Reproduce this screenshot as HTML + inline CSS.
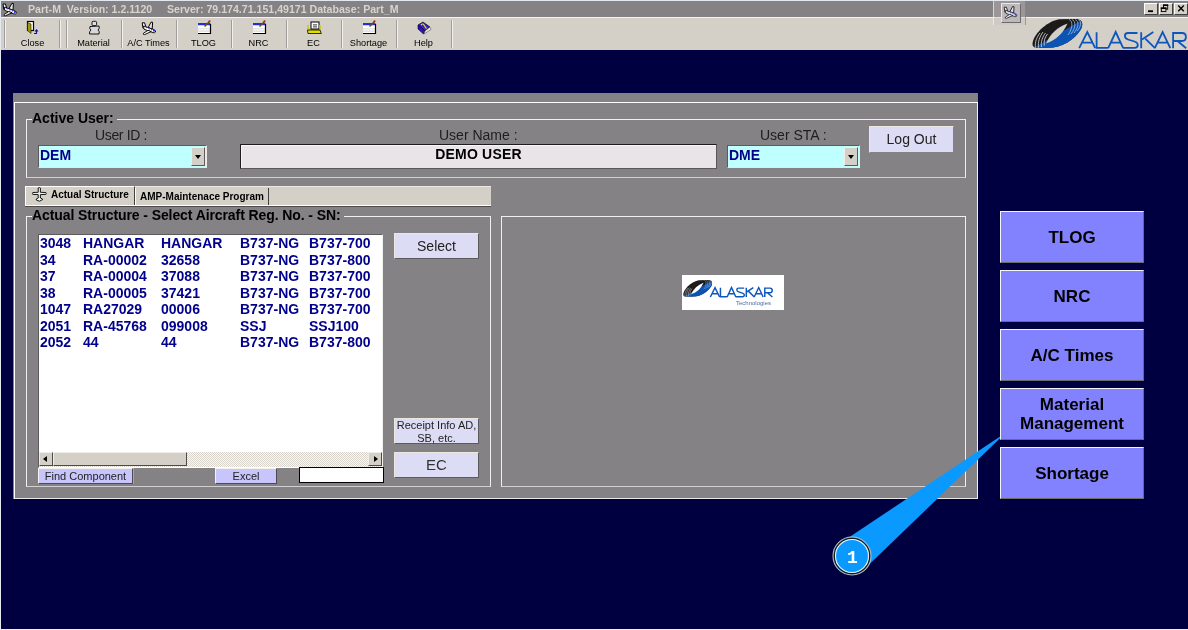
<!DOCTYPE html>
<html><head><meta charset="utf-8">
<style>
*{margin:0;padding:0;box-sizing:border-box}
html,body{width:1188px;height:630px;overflow:hidden;background:#000040;font-family:"Liberation Sans",sans-serif}
.a{position:absolute}
#wrap{position:absolute;left:0;top:0;width:1188px;height:630px;background:#000040;will-change:transform}
#title{left:1px;top:1px;width:1187px;height:16px;background:#848284}
.tt{color:#d8d4cc;font-weight:bold;font-size:10.6px;top:3px;white-space:nowrap}
#tool{left:1px;top:17px;width:1187px;height:33px;background:#d4d0c8;border-top:1px solid #f4f2ee}
.sep{top:20px;width:2px;height:28px;border-left:1px solid #a09e9c;border-right:1px solid #f2f0ec}
.tl{top:37.5px;font-size:9.2px;color:#000;white-space:nowrap;text-align:center;width:55px}
#panel{left:13px;top:93px;width:965px;height:406px;background:#848284}
.grp{border:1px solid #f0f0f0;border-bottom-color:#d0d0d0}
.lbl{font-size:14px;color:#1e1e1e;white-space:nowrap}
.btn{background:#dcdcf4;border:1px solid;border-color:#ece8e0 #5c5a5c #5c5a5c #ece8e0;text-align:center;color:#222;white-space:nowrap}
.rb{left:1000px;width:144px;height:52px;background:#8282ff;border:1px solid;border-color:#f4f4f4 #6c6c6c #6c6c6c #f4f4f4;font-weight:bold;font-size:17px;color:#000;text-align:center;display:flex;align-items:center;justify-content:center;line-height:19px}
.combo{background:#c0ffff;border:1px solid;border-color:#5c5a5c #ece8e4 #ece8e4 #5c5a5c}
.combo span{position:absolute;left:1px;top:-1px;font-weight:bold;font-size:14px;line-height:21px;color:#00008c}
.dd{position:absolute;top:1px;width:14px;height:19px;background:#d4d0c8;border:1px solid;border-color:#f0eee8 #5c5a5c #5c5a5c #f0eee8}
.dd:after{content:"";position:absolute;left:3px;top:7px;border-left:3.5px solid transparent;border-right:3.5px solid transparent;border-top:4px solid #000}
.tab{font-weight:bold;font-size:10px;color:#000;white-space:nowrap}
.sbb{width:14px;height:14px;background:#d4d0c8;border:1px solid;border-color:#f0eee8 #4c4a4c #4c4a4c #f0eee8}
.al{position:absolute;left:3px;top:3px;border-top:3.5px solid transparent;border-bottom:3.5px solid transparent;border-right:4px solid #000}
.ar{position:absolute;left:5px;top:3px;border-top:3.5px solid transparent;border-bottom:3.5px solid transparent;border-left:4px solid #000}
.row b{position:absolute;font-weight:bold}
.c1{left:0}.c2{left:43px}.c3{left:121px}.c4{left:200px}.c5{left:269px}
.wc{top:3px;width:14px;height:12px;background:#d4d0c8;border:1px solid;border-color:#fff #404040 #404040 #fff}
.row{position:relative;font-weight:bold;font-size:14px;color:#00008c;white-space:nowrap;height:16.5px;line-height:16.5px}
</style></head><body>
<div id="wrap">
<div class="a" style="left:0;top:0;width:1188px;height:1px;background:#e4e8f0"></div>
<div class="a" style="left:0;top:0;width:1px;height:630px;background:#e4e8f0"></div>
<div class="a" style="left:0;top:629px;width:1188px;height:1px;background:#f0f0f0"></div>
<!-- title bar -->
<div id="title" class="a"></div>
<div class="a tt" style="left:28px">Part-M&nbsp; Version: 1.2.1120</div>
<div class="a tt" style="left:167px">Server: 79.174.71.151,49171 Database: Part_M</div>

<!-- toolbar -->
<div id="tool" class="a"></div>
<div class="a sep" style="left:4px"></div>
<div class="a sep" style="left:59px"></div>
<div class="a sep" style="left:66px"></div>
<div class="a sep" style="left:121px"></div>
<div class="a sep" style="left:176px"></div>
<div class="a sep" style="left:231px"></div>
<div class="a sep" style="left:286px"></div>
<div class="a sep" style="left:341px"></div>
<div class="a sep" style="left:396px"></div>
<div class="a sep" style="left:451px"></div>
<div class="a tl" style="left:5px">Close</div>
<div class="a tl" style="left:66px">Material</div>
<div class="a tl" style="left:121px">A/C Times</div>
<div class="a tl" style="left:176px">TLOG</div>
<div class="a tl" style="left:231px">NRC</div>
<div class="a tl" style="left:286px">EC</div>
<div class="a tl" style="left:341px">Shortage</div>
<div class="a tl" style="left:396px">Help</div>

<!-- panel -->
<div id="panel" class="a"></div>
<div class="a" style="left:14px;top:102px;width:964px;height:397px;border:1px solid #fff;border-right-color:#f0f0f0;border-bottom-color:#e8e8e8"></div>

<!-- Active user group -->
<div class="a grp" style="left:26px;top:119px;width:940px;height:59px"></div>
<div class="a" style="left:32px;top:110px;background:#848284;padding:0 3px 0 0;font-weight:bold;font-size:14px;color:#000">Active User:</div>
<div class="a lbl" style="left:95px;top:127px;letter-spacing:-0.35px">User ID :</div>
<div class="a lbl" style="left:439px;top:127px">User Name :</div>
<div class="a lbl" style="left:760px;top:127px">User STA :</div>

<!-- fields -->
<div class="a combo" style="left:38px;top:145px;width:169px;height:23px"><span>DEM</span><i class="dd" style="left:152px"></i></div>
<div class="a" style="left:240px;top:144px;width:477px;height:25px;background:#e8e4e8;border:1px solid;border-color:#1c1c1c #5a585a #5a585a #1c1c1c;box-shadow:inset 1px 1px 0 #f8f6f8"></div>
<div class="a" style="left:241px;top:142px;width:475px;text-align:center;font-weight:bold;font-size:14px;line-height:25px;color:#000;letter-spacing:0.2px">DEMO USER</div>
<div class="a combo" style="left:727px;top:145px;width:133px;height:23px"><span>DME</span><i class="dd" style="left:116px"></i></div>
<div class="a btn" style="left:869px;top:126px;width:85px;height:27px;font-size:14px;line-height:25px;border-color:#ece8e0 #848284 #848284 #ece8e0">Log Out</div>

<!-- tabs -->
<div class="a" style="left:25px;top:186px;width:466px;height:21px;background:#d4d0c8;border-bottom:1px solid #4c4a4c"></div>
<div class="a" style="left:25px;top:205px;width:466px;height:1px;background:#fff"></div>
<div class="a" style="left:25px;top:186px;width:466px;height:1px;background:#eceae4"></div>
<div class="a" style="left:25px;top:186px;width:110px;height:19px;border-left:1px solid #fff;border-top:1px solid #fff;border-right:1px solid #404040"></div>
<div class="a tab" style="left:51px;top:189px">Actual Structure</div>
<div class="a" style="left:268px;top:188px;width:1px;height:17px;background:#404040"></div>
<div class="a" style="left:135px;top:188px;width:1px;height:17px;background:#fff"></div>
<div class="a tab" style="left:140px;top:191px">AMP-Maintenace Program</div>

<!-- structure group -->
<div class="a grp" style="left:26px;top:216px;width:465px;height:271px"></div>
<div class="a" style="left:32px;top:207px;background:#848284;padding:0 3px 0 0;font-weight:bold;font-size:14px;color:#000;letter-spacing:-0.09px">Actual Structure - Select Aircraft Reg. No. - SN:</div>
<div class="a grp" style="left:501px;top:216px;width:465px;height:271px"></div>

<!-- list -->
<div class="a" style="left:38px;top:234px;width:345px;height:234px;background:#fff;border:1px solid;border-color:#5c5a5c #f0f0f0 #fff #5c5a5c"></div>
<div class="a" style="left:40px;top:235px">
<div class="row"><b class="c1">3048</b><b class="c2">HANGAR</b><b class="c3">HANGAR</b><b class="c4">B737-NG</b><b class="c5">B737-700</b></div>
<div class="row"><b class="c1">34</b><b class="c2">RA-00002</b><b class="c3">32658</b><b class="c4">B737-NG</b><b class="c5">B737-800</b></div>
<div class="row"><b class="c1">37</b><b class="c2">RA-00004</b><b class="c3">37088</b><b class="c4">B737-NG</b><b class="c5">B737-700</b></div>
<div class="row"><b class="c1">38</b><b class="c2">RA-00005</b><b class="c3">37421</b><b class="c4">B737-NG</b><b class="c5">B737-700</b></div>
<div class="row"><b class="c1">1047</b><b class="c2">RA27029</b><b class="c3">00006</b><b class="c4">B737-NG</b><b class="c5">B737-700</b></div>
<div class="row"><b class="c1">2051</b><b class="c2">RA-45768</b><b class="c3">099008</b><b class="c4">SSJ</b><b class="c5">SSJ100</b></div>
<div class="row"><b class="c1">2052</b><b class="c2">44</b><b class="c3">44</b><b class="c4">B737-NG</b><b class="c5">B737-800</b></div>
</div>
<!-- scrollbar -->
<div class="a" style="left:39px;top:452px;width:343px;height:15px;background:repeating-conic-gradient(#d8d4cc 0 25%,#fbfaf8 0 50%) 0 0/2px 2px"></div>
<div class="a sbb" style="left:39px;top:452px"><i class="al"></i></div>
<div class="a" style="left:53px;top:452px;width:134px;height:14px;background:#d4d0c8;border:1px solid;border-color:#f0eee8 #4c4a4c #4c4a4c #f0eee8"></div>
<div class="a sbb" style="left:368px;top:452px"><i class="ar"></i></div>

<!-- bottom buttons -->
<div class="a btn" style="left:38px;top:468px;width:95px;height:16px;background:#c8c4fc;font-size:11px;line-height:15px;border-color:#f4f2ec #4c4a4c #4c4a4c #f4f2ec">Find Component</div>
<div class="a" style="left:133px;top:468px;width:82px;height:16px;border-left:1px solid #a8a6a8"></div>
<div class="a btn" style="left:215px;top:468px;width:62px;height:16px;background:#c8c4fc;font-size:11px;line-height:14px;border-color:#f4f2ec #4c4a4c #4c4a4c #f4f2ec">Excel</div>
<div class="a" style="left:299px;top:467px;width:85px;height:16px;background:#fff;border:1px solid #000"></div>
<div class="a btn" style="left:394px;top:233px;width:85px;height:26px;font-size:14px;line-height:24px">Select</div>
<div class="a btn" style="left:394px;top:418px;width:85px;height:26px;font-size:11px;line-height:12.5px;padding-top:0px">Receipt Info AD,<br>SB, etc.</div>
<div class="a btn" style="left:394px;top:452px;width:85px;height:26px;font-size:15px;line-height:24px;color:#333">EC</div>

<!-- image logo -->
<div class="a" style="left:682px;top:275px;width:102px;height:35px;background:#fff"></div>

<!-- title right: plane button & window controls -->
<div class="a" style="left:993px;top:1px;width:33px;height:24px;background:rgba(200,190,190,0.35);border-left:1px solid rgba(255,255,255,0.6);border-right:1px solid rgba(120,120,120,0.6)"></div>
<div class="a" style="left:1001px;top:3px;width:20px;height:20px;background:#bcb8bc;border:1px solid;border-color:#e8e6e8 #6c6a6c #6c6a6c #e8e6e8"></div>
<div class="a wc" style="left:1144px"></div>
<div class="a wc" style="left:1159px"></div>
<div class="a wc" style="left:1174px;width:14px"></div>

<svg class="a" style="left:0;top:0" width="1188" height="630" viewBox="0 0 1188 630">
 <!-- callout -->
 <polygon points="1000.5,436.3 1000.8,437.6 866,567.5 845,540" fill="#0a99ff"/>
 <circle cx="852" cy="556" r="19" fill="#0a99ff" stroke="#b8b8b8" stroke-width="1.1"/>
 <circle cx="852" cy="556" r="17.7" fill="none" stroke="#1a1a1a" stroke-width="1.2"/>
 <circle cx="852" cy="556" r="16.5" fill="none" stroke="#f0f0f0" stroke-width="1.1"/>
 <text x="852.5" y="563" font-family="Liberation Mono" font-weight="bold" font-size="18" fill="#fff" text-anchor="middle">1</text>

 <!-- top-right ALASKAR logo -->
 <g style="color:#d4d0c8"><g id="logo">
  <defs><clipPath id="ring"><path d="M1032.5,44 C1032.5,36 1045,22 1059,19.3 L1076,19 C1083,19 1083.5,25 1080.5,30 C1074,40 1062,47.8 1048,47.8 L1037,47.8 C1033.5,47.8 1032.5,46 1032.5,44 Z"/></clipPath></defs>
  <g clip-path="url(#ring)">
   <rect x="1030" y="17" width="56" height="33" fill="#1c1a1a"/>
   <polygon points="1031,49.5 1084,19 1086,50 1030,50" fill="#0c54b4"/>
   <g fill="none" stroke="#e0e0e0" stroke-width="0.8">
    <path d="M1035.5,48 C1034.5,42 1037,37 1040,33"/><path d="M1038.5,48 C1037.5,42 1040,36 1043,32"/><path d="M1041.5,47 C1040.5,42 1042.5,37 1045.5,33"/><path d="M1044.3,45.5 C1043.5,41 1045,37 1047.5,34"/>
   </g>
   <g fill="none" stroke="#b8cce8" stroke-width="0.7">
    <path d="M1069,19.5 C1073,21 1073,28 1068,35"/><path d="M1072,19.5 C1076,21 1076,28 1071,34"/><path d="M1075,19.5 C1079,21 1079,27 1074,33"/><path d="M1078,19.5 C1082,21 1081,27 1077,31"/>
   </g>
  </g>
  <path d="M1046,43.5 C1050.3,33.7 1057.4,27.1 1067.5,23.5 C1063.2,33.3 1056.1,39.9 1046,43.5 Z" fill="currentColor"/>
  <g fill="none" stroke="#0c56bc" style="stroke-width:var(--sw,1.8px)" stroke-linejoin="miter">
   <path d="M1079.2,48.2 L1087.3,32 L1095.2,48.2 M1082.1,42.7 H1092.5"/>
   <path d="M1096.6,32.2 V47.9 H1108.2"/>
   <path d="M1108.2,48.2 L1115.7,32 L1123.2,48.2 M1110.9,42.7 H1120.5"/>
   <path d="M1137.5,33 H1128 Q1124.9,33 1124.9,35.8 Q1124.9,38.6 1128,39.5 L1134.5,41.5 Q1137.8,42.5 1137.8,45 Q1137.8,47.9 1134.5,47.9 H1123"/>
   <path d="M1141.2,32.2 V48.2 M1153.3,32 L1142,39.5 M1145.3,38.6 L1155,48.2"/>
   <path d="M1154.8,48.2 L1162.6,32 L1170.3,48.2 M1157.6,42.7 H1167.6"/>
   <path d="M1173.1,48.2 V33 H1182 Q1185.9,33 1185.9,37 Q1185.9,41 1182,41 H1173.1 M1177.5,41 L1186.2,48.2"/>
  </g>
 </g></g>

 <!-- small logo in image -->
 <use href="#logo" transform="translate(84.4,269) scale(0.58)" style="color:#fff;--sw:2.5px"/>
 <text x="736" y="305" font-family="Liberation Sans" font-size="5.5" fill="#4a6aa0" textLength="35" lengthAdjust="spacingAndGlyphs">Technologies</text>

<defs><g id="plane">
  <path d="M1.2,1.8 L3.6,1.8 L5,6.5 L2,7.2 Z" fill="#fff" stroke="#000" stroke-width="1"/>
  <path d="M7.2,6.5 L10,1.2 L11.6,1.2 L11.2,8.2 Z" fill="#e8e8e8" stroke="#000" stroke-width="1"/>
  <path d="M2.5,5 L12,8.2 Q15.2,9.3 14.6,11 Q14,12.2 12,11.6 L3,8.2 Z" fill="#fff" stroke="#000" stroke-width="0.9"/>
  <path d="M7,9.3 L2.5,12.2 Q1.8,13.8 3.6,13.6 L10.2,10.6 Z" fill="#f4f4f4" stroke="#000" stroke-width="0.9"/>
  <circle cx="5.5" cy="6.6" r="0.7" fill="#3030e8"/><circle cx="8.2" cy="7.7" r="0.7" fill="#3030e8"/><circle cx="10.6" cy="8.7" r="0.7" fill="#3030e8"/><circle cx="13" cy="9.8" r="1" fill="#2020f0"/>
 </g></defs>
 <!-- title plane -->
 <use href="#plane" transform="translate(1.8,2.2)"/>
 <!-- title right plane -->
 <use href="#plane" transform="translate(1003,5.5) scale(0.95)" opacity="0.8"/>
 <!-- window control glyphs -->
 <rect x="1148" y="10.3" width="5" height="1.8" fill="#000"/>
 <rect x="1163.5" y="5" width="4.2" height="4.2" fill="none" stroke="#000" stroke-width="0.9"/><rect x="1163" y="4.5" width="5.2" height="1.5" fill="#000"/>
 <rect x="1161.3" y="8" width="4.6" height="3.6" fill="#d4d0c8" stroke="#000" stroke-width="0.9"/><rect x="1160.8" y="7.5" width="5.6" height="1.5" fill="#000"/>
 <path d="M1178.2,5.5 L1183.8,11.3 M1183.8,5.5 L1178.2,11.3" stroke="#000" stroke-width="1.4"/>
 <!-- tab plane icon -->
 <g fill="#f0f0f0" stroke="#000" stroke-width="0.9">
  <path d="M38.2,188 Q39.3,187 40.4,188 L40.4,192.3 L45.8,192.5 Q46.6,193.4 45.8,194.4 L40.4,194.6 L40.4,198 L42.5,199 Q42.5,200.3 41.5,200.3 L39.3,201.2 L37,200.3 Q36,200.3 36.2,199 L38.2,198 L38.2,194.6 L32.8,194.4 Q32,193.4 32.8,192.5 L38.2,192.3 Z"/>
 </g>
 <!-- toolbar icons -->
 <!-- close door -->
 <g>
  <rect x="27.5" y="21.5" width="6" height="9" fill="#fff" stroke="#000" stroke-width="1.2"/>
  <path d="M27.5,22.5 L31,24 L31,33.5 L27.5,30.5 Z" fill="#a09a10" stroke="#101000" stroke-width="0.6"/>
  <path d="M34,33.5 H36.5 V30.5 M35,31.5 L36.5,29.8 L38,31.5" fill="none" stroke="#1010b0" stroke-width="1.1"/>
 </g>
 <!-- material pawn -->
 <g>
  <rect x="92" y="21.3" width="4.6" height="4.3" rx="1.2" fill="#e0e0e0" stroke="#000" stroke-width="0.9"/>
  <path d="M90,26.5 Q89,29 91,30 Q89,31.5 89.5,34 L99,34 Q100,31.5 98,30 Q100,28.5 99,26 Z" fill="#d8d8d8" stroke="#000" stroke-width="0.9"/>
 </g>
 <!-- a/c plane -->
 <use href="#plane" transform="translate(141,21)"/>
 <g id="note">
  <rect x="198" y="23" width="12.5" height="10.5" fill="#fff"/>
  <rect x="198" y="23" width="12.5" height="2" fill="#2030e0"/>
  <rect x="198" y="25" width="12.5" height="1" fill="#a8e0e0"/>
  <rect x="198" y="28.5" width="12.5" height="0.8" fill="#d0d0d0"/>
  <rect x="198" y="30.5" width="12.5" height="1.2" fill="#d8d8d8"/>
  <path d="M210.5,24 V33.5 H198" fill="none" stroke="#000" stroke-width="1.2"/>
  <path d="M204.5,26.5 L209.5,21.5" stroke="#605810" stroke-width="1.6"/>
  <circle cx="209.5" cy="21.3" r="1" fill="#d01010"/>
 </g>
 <use href="#note" transform="translate(55,0)"/>
 <use href="#note" transform="translate(165,0)"/>
 <!-- EC printer -->
 <g>
  <rect x="311" y="22" width="8" height="7" fill="#fff" stroke="#000" stroke-width="1"/>
  <rect x="313" y="24" width="4" height="1.6" fill="#808080"/>
  <rect x="313" y="26.5" width="4" height="0.8" fill="#000"/>
  <path d="M308,25 V30 M320,25 V30" stroke="#c8c800" stroke-width="1.5"/>
  <path d="M307.5,30 L320,30 L321.3,33.5 L308,33.5 Z" fill="#e0e000" stroke="#000" stroke-width="0.8"/>
 </g>
 <!-- help book -->
 <g>
  <path d="M418,25 L423,22 L430,27 L425,31 Z" fill="#3020d0" stroke="#000" stroke-width="0.6"/>
  <path d="M418,25 L418,29 L423.5,34 L425,31 Z" fill="#3010c0" stroke="#000" stroke-width="0.6"/>
  <path d="M425,31 L430,27 L431,29.5 L424,34 Z" fill="#e8e8e8" stroke="#404040" stroke-width="0.5"/>
  <path d="M421,25 Q423,23 424,25 Q425,27 426.5,28.5" fill="none" stroke="#f0e000" stroke-width="1.1"/>
 </g>
</svg>

<!-- right buttons -->
<div class="a rb" style="top:211px">TLOG</div>
<div class="a rb" style="top:270px">NRC</div>
<div class="a rb" style="top:329px">A/C Times</div>
<div class="a rb" style="top:388px">Material<br>Management</div>
<div class="a rb" style="top:447px">Shortage</div>
</div>
</body></html>
